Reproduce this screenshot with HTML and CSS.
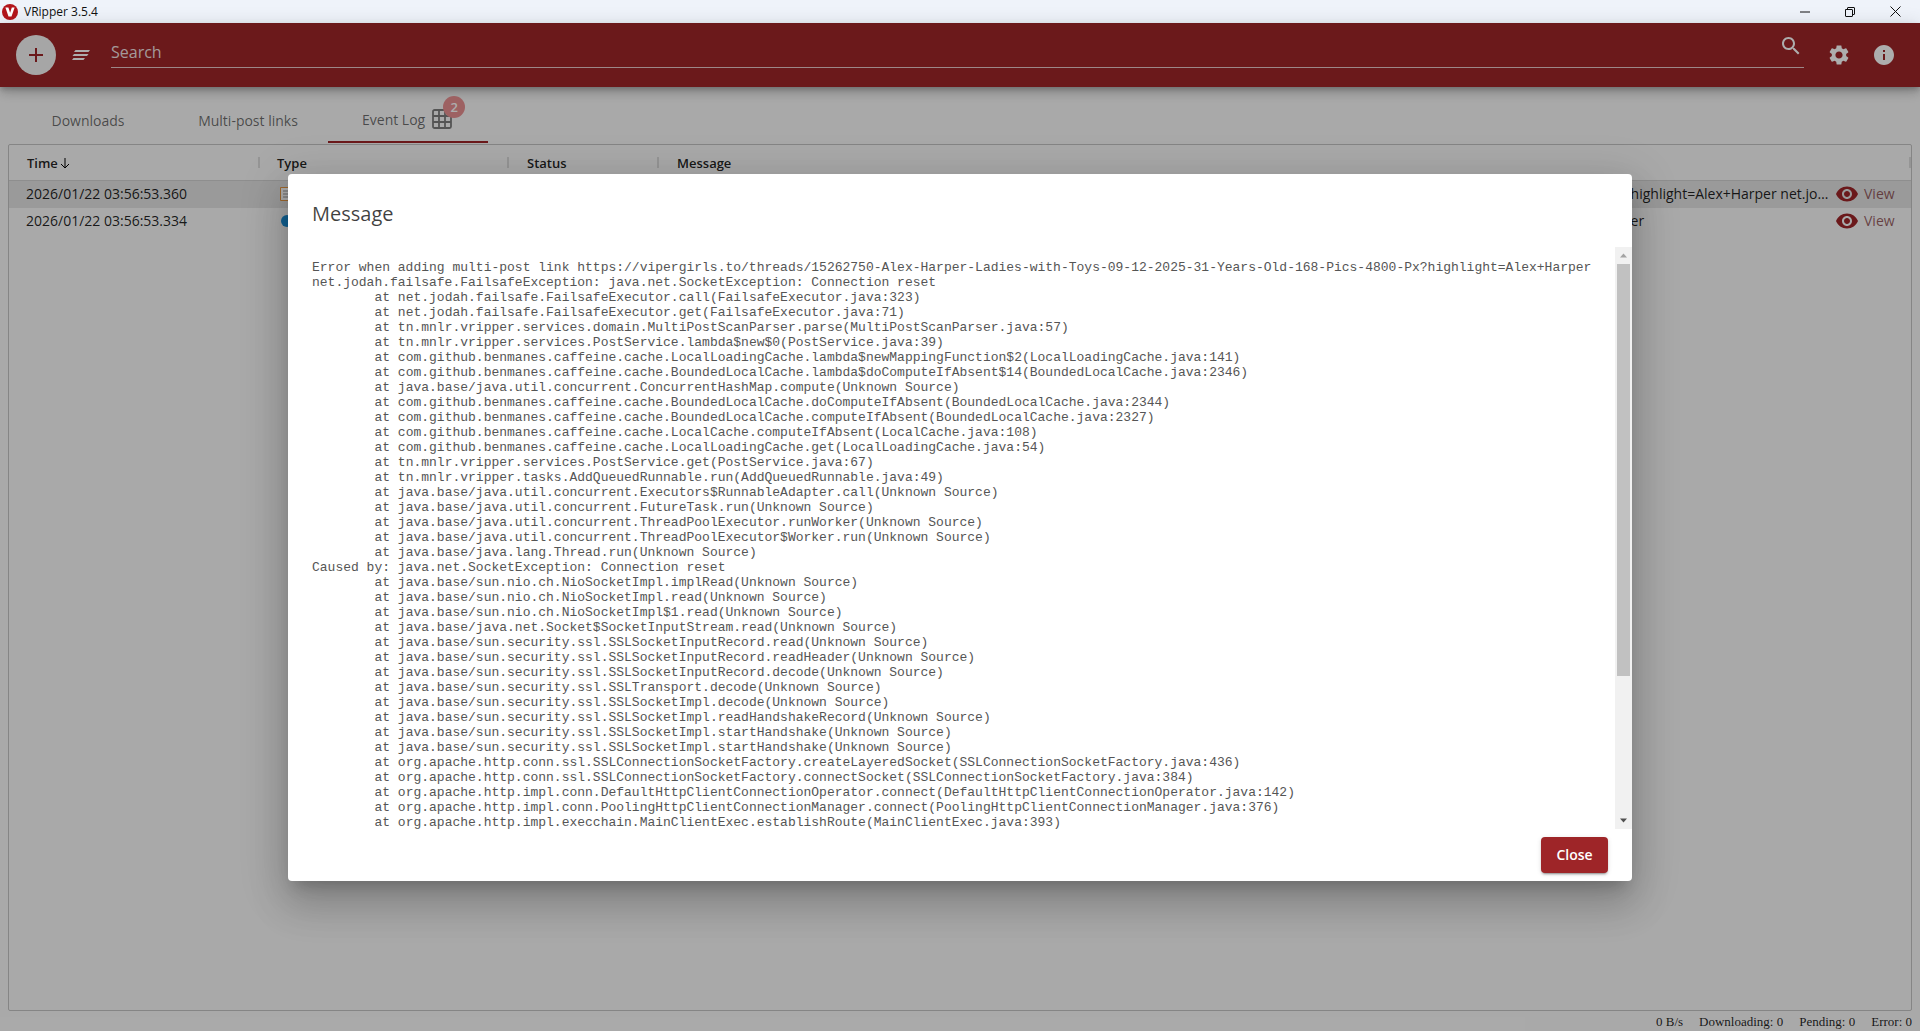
FILE: index.html
```html
<!DOCTYPE html>
<html lang="en">
<head>
<meta charset="utf-8">
<title>VRipper 3.5.4</title>
<link rel="stylesheet" href="styles.css">
</head>
<body>
<div class="titlebar">
  <div class="app-logo"><svg viewBox="0 0 16 16" width="16" height="16"><circle cx="8" cy="8" r="8" fill="#b3151b"/><path d="M3.4 3.4h3l1.7 5.4 1.7-5.4h2.8l-3.1 9h-3z" fill="#fff"/></svg></div>
  <span class="app-title">VRipper 3.5.4</span>
  <div class="win-controls">
    <svg viewBox="0 0 10 10" width="10" height="10"><path d="M0 5h10" stroke="#111" fill="none"/></svg>
    <svg viewBox="0 0 10 10" width="10" height="10"><path d="M.5 2.5h6.5a.5.5 0 0 1 .5.5v6a.5.5 0 0 1-.5.5H1a.5.5 0 0 1-.5-.5zM2.5 2.5V1q0-.5.5-.5h6q.5 0 .5.5v6q0 .5-.5.5H7.5" stroke="#111" fill="none"/></svg>
    <svg viewBox="0 0 11 11" width="11" height="11"><path d="M.5.5l10 10M10.500.5l-10 10" stroke="#111" fill="none"/></svg>
  </div>
</div>
<div class="app">
  <header class="toolbar">
    <button class="add-btn"><svg viewBox="0 0 24 24" width="24" height="24"><path d="M19 13h-6v6h-2v-6H5v-2h6V5h2v6h6z" fill="#9e2528"/></svg></button>
    <svg class="menu-icon" viewBox="0 0 18 10" width="18" height="10"><path d="M3.500 0H18l-1.500 2H2zM2 4h14.500L15 6H.5zM1.500 8H13l-1.500 2H0z" fill="#fff"/></svg>
    <div class="search-field">
      <span class="search-label">Search</span>
      <svg class="search-icon" viewBox="0 0 24 24" width="24" height="24"><path d="M15.500 14h-.79l-.28-.27C15.410 12.590 16 11.110 16 9.500 16 5.910 13.090 3 9.500 3S3 5.910 3 9.500 5.910 16 9.500 16c1.610 0 3.090-.59 4.230-1.570l.27.28v.79l5 4.990L20.490 19l-4.990-5zm-6 0C7.010 14 5 11.990 5 9.500S7.010 5 9.500 5 14 7.010 14 9.500 11.990 14 9.500 14z" fill="#fff"/></svg>
    </div>
    <svg class="tool-icon" viewBox="0 0 24 24" width="24" height="24"><path d="M19.140 12.940c.04-.3.06-.61.06-.94 0-.32-.02-.64-.07-.94l2.030-1.580c.18-.14.23-.41.12-.61l-1.920-3.320c-.12-.22-.37-.29-.59-.22l-2.390.96c-.5-.38-1.030-.7-1.620-.94l-.36-2.540c-.04-.24-.24-.41-.48-.41h-3.840c-.24 0-.43.17-.47.41l-.36 2.540c-.59.24-1.130.57-1.620.94l-2.390-.96c-.22-.08-.47 0-.59.22L2.740 8.870c-.12.21-.08.47.12.61l2.030 1.580c-.05.3-.09.63-.09.94s.02.64.07.94l-2.030 1.580c-.18.14-.23.41-.12.61l1.920 3.320c.12.22.37.29.59.22l2.390-.96c.5.38 1.030.7 1.620.94l.36 2.540c.05.24.24.41.48.41h3.840c.24 0 .44-.17.47-.41l.36-2.540c.59-.24 1.130-.56 1.620-.94l2.390.96c.22.08.47 0 .59-.22l1.920-3.320c.12-.22.07-.47-.12-.61l-2.010-1.580zM12 15.600c-1.980 0-3.600-1.620-3.600-3.600s1.620-3.600 3.600-3.600 3.600 1.620 3.600 3.600-1.620 3.600-3.600 3.600z" fill="#fff"/></svg>
    <svg class="tool-icon" viewBox="0 0 24 24" width="24" height="24"><path fill-rule="evenodd" d="M12 2C6.480 2 2 6.480 2 12s4.480 10 10 10 10-4.480 10-10S17.520 2 12 2zm1 15h-2v-6h2zm0-8h-2V7h2z" fill="#fff"/></svg>
  </header>

  <nav class="tabs">
    <div class="tab">Downloads</div>
    <div class="tab">Multi-post links</div>
    <div class="tab tab-active">
      <span>Event Log</span>
      <span class="tab-icon">
        <svg viewBox="0 0 20 20" width="20" height="20"><path d="M2.500 1h15A1.500 1.500 0 0 1 19 2.500v15a1.500 1.500 0 0 1-1.500 1.500h-15A1.500 1.500 0 0 1 1 17.500v-15A1.500 1.500 0 0 1 2.500 1zM7 1v18M13 1v18M1 7h18M1 13h18" fill="none" stroke="#000" stroke-opacity=".5" stroke-width="1.800"/></svg>
        <span class="badge">2</span>
      </span>
    </div>
  </nav>

  <section class="table">
    <div class="row head">
      <div class="th"><span class="th-label">Time<svg viewBox="0 0 12 12" width="12" height="12"><path d="M6 1v10M2 7l4 4 4-4" fill="none" stroke="#000" stroke-width="1"/></svg></span><i class="sep"></i></div>
      <div class="th"><span class="th-label">Type</span><i class="sep"></i></div>
      <div class="th"><span class="th-label">Status</span><i class="sep"></i></div>
      <div class="th th-wide"><span class="th-label">Message</span><i class="sep"></i></div>
    </div>
    <div class="row selected">
      <div class="td">2026/01/22 03:56:53.360</div>
      <div class="td td-icon"><svg viewBox="0 0 16 16" width="16" height="16"><path d="M1.500 1.500h13v13h-13z" fill="#fff" stroke="#e89a45"/><path d="M4 5h9M4 8h9M4 11h9" stroke="#999"/></svg></div>
      <div class="td"></div>
      <div class="td td-msg">Error when adding multi-post link https://vipergirls.to/threads/15262750-Alex-Harper-Ladies-with-Toys-09-12-2025-31-Years-Old-168-Pics-4800-Px?highlight=Alex+Harper net.jodah.failsafe.FailsafeException: java.net.SocketException: Connection reset</div>
      <div class="td td-view"><svg viewBox="0 0 24 24" width="24" height="24"><path d="M12 4.500C7 4.500 2.730 7.610 1 12c1.730 4.390 6 7.500 11 7.500s9.270-3.110 11-7.500c-1.730-4.390-6-7.500-11-7.500zM12 17c-2.760 0-5-2.240-5-5s2.240-5 5-5 5 2.240 5 5-2.240 5-5 5zm0-8c-1.660 0-3 1.340-3 3s1.340 3 3 3 3-1.340 3-3-1.340-3-3-3z" fill="#9e2528"/></svg><span>View</span></div>
    </div>
    <div class="row">
      <div class="td">2026/01/22 03:56:53.334</div>
      <div class="td td-icon"><svg viewBox="0 0 16 16" width="16" height="16"><circle cx="8" cy="8" r="6" fill="#1b8fd8"/></svg></div>
      <div class="td"></div>
      <div class="td td-msg">Scanning link https://vipergirls.to/threads/15262750-Alex-Harper-Ladies-with-Toys-09-12-2025-31-Years-Old-168-Pics-4800-Px?highlight=Alex+Harper</div>
      <div class="td td-view"><svg viewBox="0 0 24 24" width="24" height="24"><path d="M12 4.500C7 4.500 2.730 7.610 1 12c1.730 4.390 6 7.500 11 7.500s9.270-3.110 11-7.500c-1.730-4.390-6-7.500-11-7.500zM12 17c-2.760 0-5-2.240-5-5s2.240-5 5-5 5 2.240 5 5-2.240 5-5 5zm0-8c-1.660 0-3 1.340-3 3s1.340 3 3 3 3-1.340 3-3-1.340-3-3-3z" fill="#9e2528"/></svg><span>View</span></div>
    </div>
  </section>

  <footer class="statusbar">
    <span>0 B/s</span>
    <span>Downloading: 0</span>
    <span>Pending: 0</span>
    <span>Error: 0</span>
  </footer>

  <div class="backdrop">
    <div class="dialog">
      <h2 class="dialog-title">Message</h2>
      <div class="dialog-body">
<pre class="trace">Error when adding multi-post link https://vipergirls.to/threads/15262750-Alex-Harper-Ladies-with-Toys-09-12-2025-31-Years-Old-168-Pics-4800-Px?highlight=Alex+Harper
net.jodah.failsafe.FailsafeException: java.net.SocketException: Connection reset
	at net.jodah.failsafe.FailsafeExecutor.call(FailsafeExecutor.java:323)
	at net.jodah.failsafe.FailsafeExecutor.get(FailsafeExecutor.java:71)
	at tn.mnlr.vripper.services.domain.MultiPostScanParser.parse(MultiPostScanParser.java:57)
	at tn.mnlr.vripper.services.PostService.lambda$new$0(PostService.java:39)
	at com.github.benmanes.caffeine.cache.LocalLoadingCache.lambda$newMappingFunction$2(LocalLoadingCache.java:141)
	at com.github.benmanes.caffeine.cache.BoundedLocalCache.lambda$doComputeIfAbsent$14(BoundedLocalCache.java:2346)
	at java.base/java.util.concurrent.ConcurrentHashMap.compute(Unknown Source)
	at com.github.benmanes.caffeine.cache.BoundedLocalCache.doComputeIfAbsent(BoundedLocalCache.java:2344)
	at com.github.benmanes.caffeine.cache.BoundedLocalCache.computeIfAbsent(BoundedLocalCache.java:2327)
	at com.github.benmanes.caffeine.cache.LocalCache.computeIfAbsent(LocalCache.java:108)
	at com.github.benmanes.caffeine.cache.LocalLoadingCache.get(LocalLoadingCache.java:54)
	at tn.mnlr.vripper.services.PostService.get(PostService.java:67)
	at tn.mnlr.vripper.tasks.AddQueuedRunnable.run(AddQueuedRunnable.java:49)
	at java.base/java.util.concurrent.Executors$RunnableAdapter.call(Unknown Source)
	at java.base/java.util.concurrent.FutureTask.run(Unknown Source)
	at java.base/java.util.concurrent.ThreadPoolExecutor.runWorker(Unknown Source)
	at java.base/java.util.concurrent.ThreadPoolExecutor$Worker.run(Unknown Source)
	at java.base/java.lang.Thread.run(Unknown Source)
Caused by: java.net.SocketException: Connection reset
	at java.base/sun.nio.ch.NioSocketImpl.implRead(Unknown Source)
	at java.base/sun.nio.ch.NioSocketImpl.read(Unknown Source)
	at java.base/sun.nio.ch.NioSocketImpl$1.read(Unknown Source)
	at java.base/java.net.Socket$SocketInputStream.read(Unknown Source)
	at java.base/sun.security.ssl.SSLSocketInputRecord.read(Unknown Source)
	at java.base/sun.security.ssl.SSLSocketInputRecord.readHeader(Unknown Source)
	at java.base/sun.security.ssl.SSLSocketInputRecord.decode(Unknown Source)
	at java.base/sun.security.ssl.SSLTransport.decode(Unknown Source)
	at java.base/sun.security.ssl.SSLSocketImpl.decode(Unknown Source)
	at java.base/sun.security.ssl.SSLSocketImpl.readHandshakeRecord(Unknown Source)
	at java.base/sun.security.ssl.SSLSocketImpl.startHandshake(Unknown Source)
	at java.base/sun.security.ssl.SSLSocketImpl.startHandshake(Unknown Source)
	at org.apache.http.conn.ssl.SSLConnectionSocketFactory.createLayeredSocket(SSLConnectionSocketFactory.java:436)
	at org.apache.http.conn.ssl.SSLConnectionSocketFactory.connectSocket(SSLConnectionSocketFactory.java:384)
	at org.apache.http.impl.conn.DefaultHttpClientConnectionOperator.connect(DefaultHttpClientConnectionOperator.java:142)
	at org.apache.http.impl.conn.PoolingHttpClientConnectionManager.connect(PoolingHttpClientConnectionManager.java:376)
	at org.apache.http.impl.execchain.MainClientExec.establishRoute(MainClientExec.java:393)</pre>
        <div class="scrollbar">
          <svg class="arrow" viewBox="0 0 17 17" width="17" height="17"><path d="M5 10.500h7L8.500 6.500z" fill="#a3a3a3"/></svg>
          <div class="thumb"></div>
          <div class="track-rest"></div>
          <svg class="arrow" viewBox="0 0 17 17" width="17" height="17"><path d="M5 6.500h7L8.500 10.500z" fill="#505050"/></svg>
        </div>
      </div>
      <div class="dialog-actions"><button class="close-btn">Close</button></div>
    </div>
  </div>
</div>
</body>
</html>
```

FILE: styles.css
```css
* { box-sizing: border-box; }
html, body { margin: 0; height: 100%; }
body {
  width: 1920px;
  height: 1031px;
  overflow: hidden;
  display: flex;
  flex-direction: column;
  font-family: "Open Sans", sans-serif;
  background: #fafafa;
}
.titlebar {
  height: 23px;
  flex: none;
  display: flex;
  align-items: center;
  background: #eff3fa;
  padding-left: 2px;
}
.app-logo { display: flex; width: 16px; height: 16px; }
.app-title { margin-left: 6px; font-size: 12px; color: #111; }
.win-controls {
  margin-left: auto;
  display: flex;
  align-items: center;
  gap: 35px;
  padding-right: 19px;
}
.app {
  position: relative;
  flex: 1;
  min-height: 0;
  display: flex;
  flex-direction: column;
}
.toolbar {
  height: 64px;
  flex: none;
  display: flex;
  align-items: center;
  background: #9e2528;
  padding: 0 24px 0 16px;
  box-shadow: 0 3px 5px -1px rgba(0,0,0,.2), 0 6px 10px rgba(0,0,0,.14), 0 1px 18px rgba(0,0,0,.12);
}
.add-btn {
  width: 40px;
  height: 40px;
  flex: none;
  border: 0;
  padding: 0;
  border-radius: 50%;
  background: #f5f5f5;
  display: flex;
  align-items: center;
  justify-content: center;
}
.menu-icon { margin-left: 16px; flex: none; }
.search-field {
  flex: 1;
  align-self: flex-start;
  margin: 12px 23px 0 21px;
  height: 33px;
  display: flex;
  justify-content: space-between;
  border-bottom: 1px solid rgba(255,255,255,.75);
}
.search-label { font-size: 16px; line-height: 34px; color: rgba(255,255,255,.88); }
.search-icon { margin: -1px 1px 0 0; }
.tool-icon { flex: none; }
.tool-icon + .tool-icon { margin-left: 21px; }
.tabs { height: 48px; margin: 8px 0 0 8px; display: flex; flex: none; }
.tab {
  width: 160px;
  height: 48px;
  display: flex;
  align-items: center;
  justify-content: center;
  gap: 7px;
  font-size: 14px;
  color: rgba(0,0,0,.58);
  padding-top: 2px;
}
.tab-active { border-bottom: 2px solid #9e2528; justify-content: flex-start; padding-left: 34px; }
.tab-icon { position: relative; display: flex; margin-top: -1px; }
.badge {
  position: absolute;
  top: -13px;
  right: -13px;
  width: 22px;
  height: 22px;
  border-radius: 50%;
  background: #e88f91;
  color: #fff;
  font-size: 13px;
  font-weight: 600;
  display: flex;
  align-items: center;
  justify-content: center;
}
.table {
  flex: 1;
  min-height: 0;
  margin: 1px 8px 0;
  border: 1px solid #c4c4c4;
  border-radius: 2px;
}
.row {
  display: grid;
  grid-template-columns: 251px 249px 150px 1fr 82px;
  height: 27px;
  padding-bottom: 2px;
  align-items: center;
  font-size: 14px;
  color: rgba(0,0,0,.87);
}
.head {
  height: 36px;
  padding-bottom: 0;
  border-bottom: 1px solid #d2d2d2;
  font-size: 13px;
  font-weight: 600;
}
.selected { background: #e3e3e3; }
.th { display: flex; align-items: center; justify-content: space-between; padding-left: 17px; }
.th:first-child { padding-left: 18px; }
.th:nth-child(3) { padding-left: 18px; }
.th-wide { grid-column: 4 / 6; padding-left: 18px; }
.th-label { display: flex; align-items: center; gap: 1px; }
.sep { width: 2px; height: 11px; background: #dcdcdc; }
.td { padding-left: 17px; white-space: nowrap; overflow: hidden; text-overflow: ellipsis; min-width: 0; }
.td-icon { padding-left: 19px; display: flex; }
.td-msg { padding-left: 18px; }
.td-view {
  display: flex;
  align-items: center;
  gap: 5px;
  padding-left: 6px;
  color: rgba(120,45,48,.75);
  overflow: visible;
}
.statusbar {
  height: 20px;
  flex: none;
  display: flex;
  justify-content: flex-end;
  align-items: center;
  gap: 16px;
  padding: 1px 8px 0 0;
  font-family: "Liberation Serif", serif;
  font-size: 13px;
  color: rgba(0,0,0,.87);
}
.backdrop {
  position: absolute;
  inset: 0;
  background: rgba(0,0,0,.32);
  display: flex;
  align-items: center;
  justify-content: center;
}
.dialog {
  width: 1344px;
  height: 707px;
  background: #fff;
  border-radius: 4px;
  display: flex;
  flex-direction: column;
  box-shadow: 0 11px 15px -7px rgba(0,0,0,.2), 0 24px 38px 3px rgba(0,0,0,.14), 0 9px 46px 8px rgba(0,0,0,.12);
}
.dialog-title {
  margin: 0;
  padding: 24px 24px 17px;
  font-size: 20px;
  font-weight: 400;
  line-height: 32px;
  color: rgba(0,0,0,.75);
  flex: none;
}
.dialog-body { height: 582px; flex: none; display: flex; padding-left: 24px; }
.trace {
  flex: 1;
  min-width: 0;
  margin: 0;
  padding-top: 13px;
  overflow: hidden;
  font-family: "Liberation Mono", "Courier New", monospace;
  font-size: 13px;
  line-height: 15px;
  color: #555;
}
.scrollbar {
  width: 17px;
  flex: none;
  display: flex;
  flex-direction: column;
  background: #f1f1f1;
}
.arrow { flex: none; display: block; }
.thumb { height: 412px; flex: none; margin: 0 2px; background: #c1c1c1; }
.track-rest { flex: 1; }
.dialog-actions { flex: 1; display: flex; align-items: flex-start; justify-content: flex-end; padding: 8px 24px 0; }
.close-btn {
  width: 67px;
  height: 36px;
  border: 0;
  border-radius: 4px;
  background: #9e2528;
  color: #fff;
  font-family: "Open Sans", sans-serif;
  font-size: 14px;
  font-weight: 600;
  box-shadow: 0 3px 1px -2px rgba(0,0,0,.2), 0 2px 2px rgba(0,0,0,.14), 0 1px 5px rgba(0,0,0,.12);
}
```
